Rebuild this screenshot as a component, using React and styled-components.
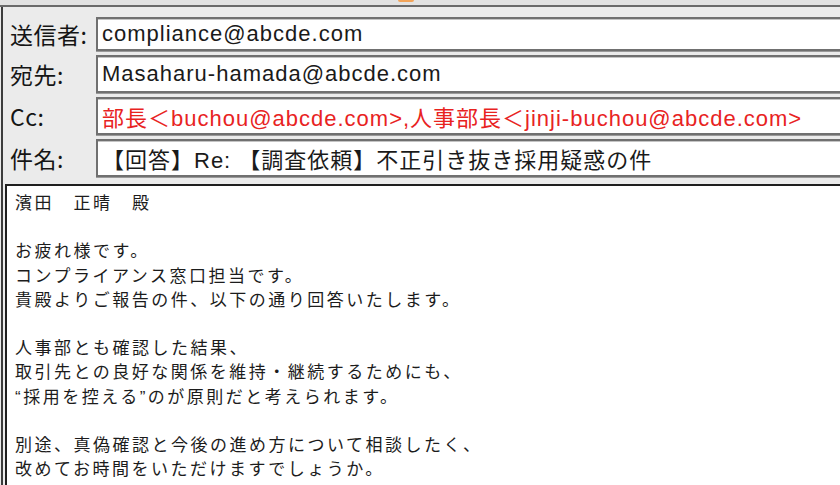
import React from 'react';
import styled, { createGlobalStyle } from 'styled-components';

const GlobalStyle = createGlobalStyle`
  html, body {
    margin: 0;
    padding: 0;
    background: #ebebeb;
    overflow: hidden;
  }
`;

const Window = styled.div`
  width: 840px;
  height: 485px;
  overflow: hidden;
  background: #ebebeb;
  display: flex;
  flex-direction: column;
  font-family: "Liberation Sans", "Noto Sans CJK JP", sans-serif;
`;

const TopStrip = styled.div`
  height: 5px;
  flex-shrink: 0;
  background: #e2e2e2;
  border-bottom: 2px solid #6a6a6a;
  display: flex;
  padding-left: 398px;
`;

const Tab = styled.span`
  width: 16px;
  height: 2px;
  border-radius: 0 0 4px 4px;
  background: #f2a45a;
`;

const Frame = styled.div`
  flex: 1;
  margin-left: 1px;
  border-left: 2px solid #3c3c3c;
  display: flex;
  flex-direction: column;
  padding-top: 10px;
  min-height: 0;
`;

const Header = styled.div`
  display: flex;
  flex-direction: column;
  gap: 4px;
`;

const Row = styled.div`
  display: flex;
  align-items: center;
  height: ${({ $short }) => ($short ? '34px' : '38px')};
`;

const Label = styled.div`
  width: 86px;
  padding-left: 7px;
  flex-shrink: 0;
  font-family: "Noto Sans CJK JP", sans-serif;
  font-size: 23px;
  color: #151515;
  white-space: nowrap;
  letter-spacing: 0.5px;
`;

const Field = styled.div`
  flex: 1;
  height: 100%;
  box-sizing: border-box;
  background: #fff;
  border: 2px solid #707070;
  border-right: none;
  box-shadow: inset 0 1px 0 #c4c4c4, 0 1px 0 #9a9a9a;
  display: flex;
  align-items: center;
  padding-left: 4px;
  font-size: 22px;
  letter-spacing: 1px;
  color: ${({ $alert }) => ($alert ? '#e8231f' : '#1a1a1a')};
  white-space: nowrap;
  overflow: hidden;
`;

const Body = styled.div`
  flex: 1;
  margin-top: 7px;
  margin-left: 2px;
  background: #fff;
  border: 2px solid #1f1f1f;
  border-right: none;
  border-bottom: none;
  padding: 6px 0 0 8px;
  font-size: 17px;
  line-height: 24.2px;
  letter-spacing: 2.5px;
  color: #1c1c1c;
  white-space: pre;
`;

const Line = styled.div`
  height: 24.2px;
`;

const headerRows = [
  { label: '送信者:', value: 'compliance@abcde.com', short: true },
  { label: '宛先:', value: 'Masaharu-hamada@abcde.com' },
  { label: 'Cc:', value: '部長＜buchou@abcde.com>,人事部長＜jinji-buchou@abcde.com>', alert: true },
  { label: '件名:', value: '【回答】Re: 【調査依頼】不正引き抜き採用疑惑の件' },
];

const bodyLines = [
  '濱田　正晴　殿',
  '',
  'お疲れ様です。',
  'コンプライアンス窓口担当です。',
  '貴殿よりご報告の件、以下の通り回答いたします。',
  '',
  '人事部とも確認した結果、',
  '取引先との良好な関係を維持・継続するためにも、',
  '“採用を控える”のが原則だと考えられます。',
  '',
  '別途、真偽確認と今後の進め方について相談したく、',
  '改めてお時間をいただけますでしょうか。',
];

const App = () => {
  return (
    <>
      <GlobalStyle />
      <Window>
        <TopStrip>
          <Tab />
        </TopStrip>
        <Frame>
          <Header>
            {headerRows.map((row) => (
              <Row key={row.label} $short={row.short}>
                <Label>{row.label}</Label>
                <Field $alert={row.alert}>{row.value}</Field>
              </Row>
            ))}
          </Header>
          <Body>
            {bodyLines.map((line, i) => (
              <Line key={i}>{line}</Line>
            ))}
          </Body>
        </Frame>
      </Window>
    </>
  );
};

export default App;
